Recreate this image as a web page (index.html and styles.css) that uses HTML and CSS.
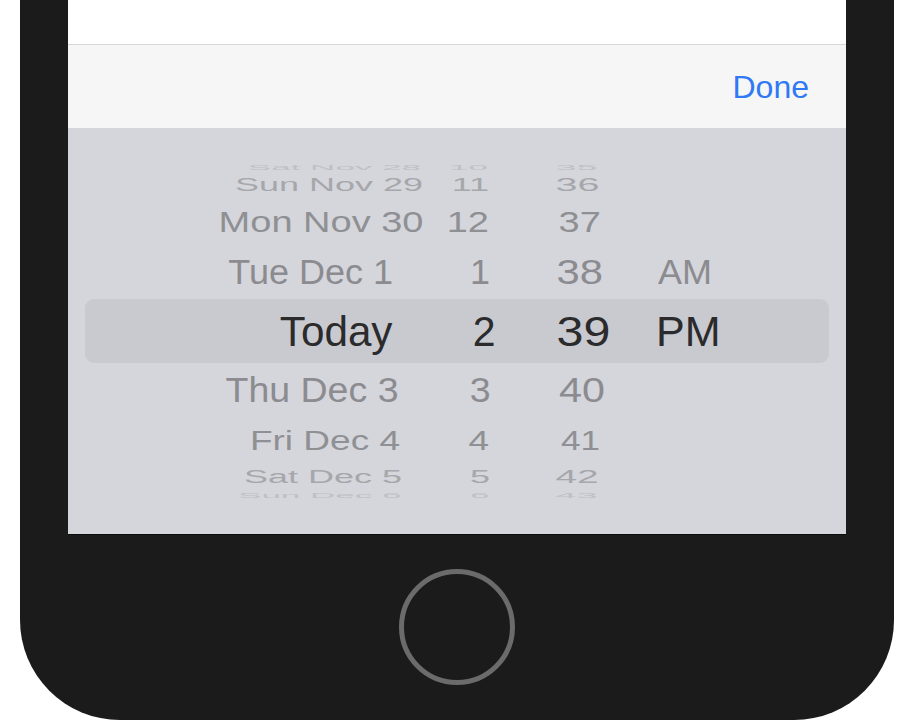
FILE: index.html
```html
<!DOCTYPE html>
<html>
<head>
<meta charset="utf-8">
<link rel="stylesheet" href="styles.css">
</head>
<body>
<div class="phone">
  <div class="screen">
    <div class="content"></div>
    <div class="toolbar"><span class="done">Done</span></div>
    <div class="picker">
      <div class="wheel">
        <div class="row rm4"><span class="d">Sat Nov 28</span><span class="h">10</span><span class="m">35</span><span class="p"></span></div>
        <div class="row rm3"><span class="d">Sun Nov 29</span><span class="h">11</span><span class="m">36</span><span class="p"></span></div>
        <div class="row rm2"><span class="d">Mon Nov 30</span><span class="h">12</span><span class="m">37</span><span class="p"></span></div>
        <div class="row rm1"><span class="d">Tue Dec 1</span><span class="h">1</span><span class="m">38</span><span class="p">AM</span></div>
        <div class="row r0"><span class="d">Today</span><span class="h">2</span><span class="m">39</span><span class="p">PM</span></div>
        <div class="row rp1"><span class="d">Thu Dec 3</span><span class="h">3</span><span class="m">40</span><span class="p"></span></div>
        <div class="row rp2"><span class="d">Fri Dec 4</span><span class="h">4</span><span class="m">41</span><span class="p"></span></div>
        <div class="row rp3"><span class="d">Sat Dec 5</span><span class="h">5</span><span class="m">42</span><span class="p"></span></div>
        <div class="row rp4"><span class="d">Sun Dec 6</span><span class="h">6</span><span class="m">43</span><span class="p"></span></div>
      </div>
    </div>
  </div>
  <div class="home"></div>
</div>
</body>
</html>
```
FILE: styles.css
```css
html, body {
  margin: 0;
  padding: 0;
  background: #ffffff;
  overflow: hidden;
  font-family: "Liberation Sans", Arial, sans-serif;
}

.phone {
  margin-left: 20px;
  width: 874px;
  height: 720px;
  background: #1b1b1b;
  border-radius: 0 0 100px 100px;
  display: flex;
  flex-direction: column;
  align-items: center;
}

.screen {
  width: 778px;
  height: 534px;
  display: flex;
  flex-direction: column;
  box-shadow: 0 1px 0 #0c0c0c;
}

.content {
  height: 44px;
  background: #ffffff;
  border-bottom: 1px solid #d8d8d8;
}

.toolbar {
  height: 83px;
  background: #f6f6f6;
  display: flex;
  align-items: center;
  justify-content: flex-end;
  padding-right: 37px;
}

.done {
  color: #3079f5;
  font-size: 32px;
  line-height: 40px;
  margin-top: 0;
}

.picker {
  flex: 1;
  background: #d5d6db;
  padding-top: 35px;
}

.wheel {
  height: 335px;
  overflow: hidden;
}

.row {
  display: grid;
  grid-template-columns: 340px 75px 140px 1fr;
  margin: 0 17px;
  height: 20px;
  line-height: 20px;
  white-space: nowrap;
  font-size: var(--fs);
  color: var(--c);
}

.row > span {
  display: block;
  transform: scaleY(var(--sy));
}

.d { text-align: right; padding-right: var(--dp); }
.h { text-align: right; padding-right: var(--hp); }
.m { text-align: left; padding-left: var(--mp); }
.p { text-align: left; padding-left: var(--pp); }

.row > .m {
  transform-origin: var(--mp) 50%;
  transform: scale(var(--mx), var(--sy));
}

.rm4 { margin-top: -6px;   --fs: 35px;   --sy: 0.22; --mx: 1.08; --c: #bfc0c4; --dp: 4px;  --hp: 12px; --mp: 55.5px; --pp: 18px; }
.rm3 { margin-top: -2px;   --fs: 36px;   --sy: 0.53; --mx: 1.1; --c: #a6a7ab; --dp: 2px;  --hp: 11px;  --mp: 55.5px; --pp: 18px; }
.rm2 { margin-top: 16.5px; --fs: 38px;   --sy: 0.76; --mx: 1.0; --c: #8f9094; --dp: 1.5px; --hp: 11px; --mp: 58.5px; --pp: 18px; }
.rm1 { margin-top: 30.5px; --fs: 36px; --sy: 0.99; --mx: 1.16; --c: #8b8b90; --dp: 32px; --hp: 10px;  --mp: 56.5px; --pp: 18px; }
.r0 {
  margin-top: 17px;
  height: 64px;
  line-height: 64px;
  border-radius: 9px;
  background: #c9cacf;
  --fs: 41px; --sy: 1.05; --mx: 1.18; --c: #2b2b2d; --dp: 32.5px; --hp: 4.5px; --mp: 56.5px; --pp: 16px;
}
.r0 > .d {
  transform-origin: right center;
  transform: scale(1.03, var(--sy));
  padding-right: 0;
  margin-right: var(--dp);
}
.r0 > .p {
  transform-origin: var(--pp) 50%;
  transform: scale(1.05, var(--sy));
}
.rp1 { margin-top: 16.5px; --fs: 37.5px; --sy: 0.94; --mx: 1.1; --c: #8b8b90; --dp: 26.5px; --hp: 9.5px; --mp: 59px; --pp: 18px; }
.rp2 { margin-top: 31.5px; --fs: 37px;   --sy: 0.76; --mx: 0.95; --c: #8f9094; --dp: 25px; --hp: 11px; --mp: 61px; --pp: 18px; }
.rp3 { margin-top: 15.5px; --fs: 36px;   --sy: 0.51; --mx: 1.08; --c: #a6a7ab; --dp: 23px; --hp: 10px; --mp: 55.5px; --pp: 18px; }
.rp4 { margin-top: -1.5px; --fs: 35px;   --sy: 0.22; --mx: 1.08; --c: #bfc0c4; --dp: 23.5px; --hp: 10.5px; --mp: 55.5px; --pp: 18px; }

.home {
  margin-top: 35px;
  width: 116px;
  height: 116px;
  box-sizing: border-box;
  border: 5.5px solid #6b6b6b;
  border-radius: 50%;
}
```
